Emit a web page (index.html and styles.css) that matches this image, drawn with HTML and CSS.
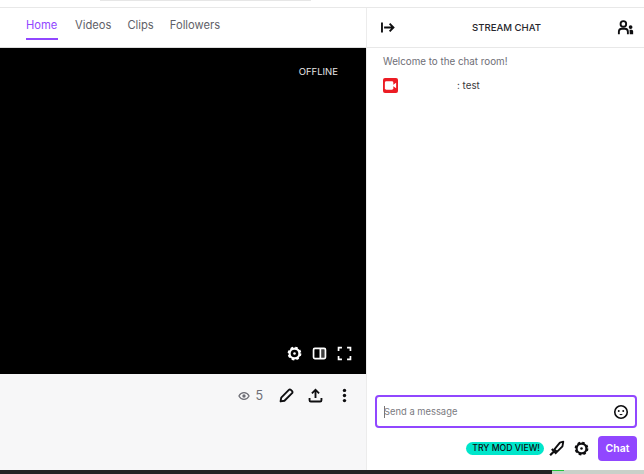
FILE: index.html
```html
<!DOCTYPE html>
<html lang="en">
<head>
    <meta charset="UTF-8">
    <title>Stream</title>
    <link rel="stylesheet" href="styles.css">
</head>
<body>
    <div class="top-strip"><div class="top-search"></div></div>
    <div class="page">
        <div class="main">
            <nav class="tabs">
                <a class="tab active">Home</a>
                <a class="tab">Videos</a>
                <a class="tab">Clips</a>
                <a class="tab">Followers</a>
            </nav>
            <div class="player">
                <span class="offline">OFFLINE</span>
                <div class="player-controls">
                    <svg class="icon" viewBox="0 0 20 20"><use href="#gear-white"/></svg>
                    <svg class="icon" viewBox="0 0 20 20"><rect x="3" y="4" width="14" height="12" rx="1.5" fill="none" stroke="#fff" stroke-width="2"/><path d="M11 4h5.5a.5.5 0 0 1 .5.5v11a.5.5 0 0 1-.5.5H11z" fill="#fff" opacity=".25"/><path d="M11 4v12" stroke="#fff" stroke-width="2"/></svg>
                    <svg class="icon" viewBox="0 0 20 20"><path d="M3 7V3h4M13 3h4v4M17 13v4h-4M7 17H3v-4" fill="none" stroke="#fff" stroke-width="2"/></svg>
                </div>
            </div>
            <div class="info">
                <div class="views">
                    <svg class="eye" viewBox="0 0 20 20"><path d="M1.500 10c2-3.800 4.900-5.500 8.500-5.500s6.500 1.700 8.500 5.500c-2 3.800-4.900 5.500-8.500 5.500s-6.500-1.700-8.500-5.500z" fill="none" stroke="#6e6e76" stroke-width="2"/><circle cx="10" cy="10" r="2.800" fill="#6e6e76"/></svg>
                    <span>5</span>
                </div>
                <svg class="icon edit" viewBox="0 0 20 20"><path d="M3 17l.8-4.600L12.800 3.400a1.600 1.600 0 0 1 2.300 0l1.500 1.500a1.600 1.600 0 0 1 0 2.300L7.600 16.200z" fill="none" stroke="#0e0e10" stroke-width="2.200" stroke-linejoin="round"/></svg>
                <svg class="icon share" viewBox="0 0 20 20"><path d="M10 13V3.500M5.800 7.500L10 3.200l4.200 4.300M3 13v2.500a1.500 1.500 0 0 0 1.500 1.500h11a1.500 1.500 0 0 0 1.500-1.500V13" fill="none" stroke="#0e0e10" stroke-width="2.200"/></svg>
                <svg class="icon more" viewBox="0 0 20 20"><circle cx="10" cy="4" r="2" fill="#0e0e10"/><circle cx="10" cy="10" r="2" fill="#0e0e10"/><circle cx="10" cy="16" r="2" fill="#0e0e10"/></svg>
            </div>
        </div>
        <aside class="chat">
            <header class="chat-head">
                <svg class="icon" viewBox="0 0 20 20"><path d="M3.500 4v12M6 10h11M12.500 5.500L17 10l-4.500 4.500" fill="none" stroke="#0e0e10" stroke-width="2.200"/></svg>
                <span class="chat-title">STREAM CHAT</span>
                <svg class="icon" viewBox="0 0 20 20"><circle cx="7.500" cy="5.800" r="3.300" fill="none" stroke="#0e0e10" stroke-width="2.200"/><path d="M2.200 18v-3a3.500 3.500 0 0 1 3.500-3.500h3.600a3.500 3.500 0 0 1 3.500 3.500v3" fill="none" stroke="#0e0e10" stroke-width="2.200"/><circle cx="16" cy="9.500" r="2.200" fill="#0e0e10"/><path d="M14.800 12.500h2.400a1.800 1.800 0 0 1 1.800 1.800V18h-4z" fill="#0e0e10"/></svg>
            </header>
            <div class="messages">
                <p class="welcome">Welcome to the chat room!</p>
                <div class="message">
                    <span class="badge"><svg viewBox="0 0 16 16"><rect x="2" y="3.500" width="9" height="9" rx="1.500" fill="#fff"/><path d="M10.500 7.500l3.500-2.500v6l-3.500-2.500z" fill="#fff"/></svg></span>
                    <span class="msg-text">: test</span>
                </div>
            </div>
            <div class="composer">
                <div class="input-box">
                    <span class="caret"></span>
                    <span class="placeholder">Send a message</span>
                    <svg class="icon smile" viewBox="0 0 20 20"><circle cx="10" cy="10" r="7.800" fill="none" stroke="#0e0e10" stroke-width="2"/><circle cx="7.200" cy="8.800" r="1.200" fill="#0e0e10"/><circle cx="12.800" cy="8.800" r="1.200" fill="#0e0e10"/><path d="M7.800 12.500a2.400 2.400 0 0 0 4.400 0z" fill="#0e0e10"/></svg>
                </div>
                <div class="composer-actions">
                    <span class="mod-pill">TRY MOD VIEW!</span>
                    <svg class="icon sword" viewBox="0 0 20 20"><path d="M18 2l-1 5.500-6.500 6.500-3-3L14 3z" fill="none" stroke="#0e0e10" stroke-width="2.200" stroke-linejoin="round"/><path d="M4.500 10.500l5.500 5.500M7 13.500L2.500 18" fill="none" stroke="#0e0e10" stroke-width="2.600"/></svg>
                    <svg class="icon" viewBox="0 0 20 20"><use href="#gear-dark"/></svg>
                    <button class="chat-btn">Chat</button>
                </div>
            </div>
        </aside>
    </div>
    <div class="taskbar">
        <div class="task-dark"></div>
        <div class="task-green"></div>
        <div class="task-gray"></div>
    </div>

    <svg class="defs" width="0" height="0">
        <defs>
            <g id="gear-white">
                <circle cx="10" cy="10" r="5.800" fill="none" stroke="#fff" stroke-width="2.600"/>
                <circle cx="10" cy="10" r="7" fill="none" stroke="#fff" stroke-width="2.200" stroke-dasharray="3 2.500"/>
                <circle cx="10" cy="10" r="1.500" fill="#fff"/>
            </g>
            <g id="gear-dark">
                <circle cx="10" cy="10" r="5.800" fill="none" stroke="#0e0e10" stroke-width="2.600"/>
                <circle cx="10" cy="10" r="7" fill="none" stroke="#0e0e10" stroke-width="2.200" stroke-dasharray="3 2.500"/>
                <circle cx="10" cy="10" r="1.500" fill="#0e0e10"/>
            </g>
        </defs>
    </svg>
</body>
</html>
```

FILE: styles.css
```css
* {
    box-sizing: border-box;
}

html, body {
    height: 100%;
}

body {
    margin: 0;
    font-family: Inter, "Liberation Sans", sans-serif;
    background: #fff;
    color: #0e0e10;
    display: flex;
    flex-direction: column;
    overflow: hidden;
}

.defs {
    display: none;
}

.top-strip {
    height: 8px;
    flex: none;
    border-bottom: 1px solid #e8e8e8;
    padding-left: 100px;
}

.top-search {
    width: 211px;
    height: 1px;
    background: #e6e6e6;
}

.page {
    flex: 1;
    display: flex;
    min-height: 0;
}

.main {
    width: 367px;
    flex: none;
    display: flex;
    flex-direction: column;
    border-right: 1px solid #ececec;
}

.tabs {
    height: 40px;
    flex: none;
    display: flex;
    gap: 16px;
    padding-left: 26px;
    border-bottom: 1px solid #ddd;
}

.tab {
    height: 32px;
    padding-top: 9px;
    font-size: 11.200px;
    line-height: 16px;
    color: #5f5f68;
}

.tab.active {
    min-width: 32px;
    margin-right: 1px;
    color: #9147ff;
    border-bottom: 2px solid #9147ff;
}

.player {
    position: relative;
    height: 326px;
    flex: none;
    background: #000;
}

.offline {
    position: absolute;
    top: 17px;
    right: 28px;
    font-size: 9.500px;
    line-height: 13px;
    color: #e6e6e6;
}

.player-controls {
    position: absolute;
    right: 13px;
    bottom: 12px;
    display: flex;
    gap: 8px;
}

.icon {
    width: 17px;
    height: 17px;
    flex: none;
}

.info {
    flex: 1;
    background: #f7f7f8;
    display: flex;
    justify-content: flex-end;
    align-items: flex-start;
    padding: 13px 13px 0 0;
}

.views {
    display: flex;
    align-items: center;
    gap: 5px;
    height: 17px;
    font-size: 12.500px;
    color: #6e6e76;
    margin-right: 15px;
}

.eye {
    width: 12px;
    height: 12px;
}

.edit {
    margin-right: 12px;
}

.share {
    margin-right: 12px;
}

.chat {
    flex: 1;
    min-width: 0;
    display: flex;
    flex-direction: column;
}

.chat-head {
    height: 40px;
    flex: none;
    display: flex;
    align-items: center;
    justify-content: space-between;
    padding: 0 10px 0 12px;
    border-bottom: 1px solid #e8e8e8;
}

.chat-title {
    font-size: 9.600px;
    font-weight: 500;
    color: #26262c;
}

.messages {
    flex: 1;
    padding: 7px 16px 0;
    font-size: 9.800px;
}

.welcome {
    margin: 0;
    height: 13px;
    line-height: 13px;
    color: #6e6e76;
}

.message {
    display: flex;
    align-items: center;
    margin-top: 9px;
    height: 16px;
}

.badge {
    width: 15px;
    height: 15px;
    border-radius: 2px;
    background: #ec1c24;
    display: flex;
}

.msg-text {
    margin-left: 59px;
    color: #3a3a3d;
}

.composer {
    flex: none;
    padding: 0 7px 9px 8px;
}

.input-box {
    height: 33px;
    display: flex;
    align-items: center;
    padding: 0 6px 0 7px;
    border: 2px solid #9147ff;
    border-radius: 4px;
}

.caret {
    width: 1px;
    height: 12px;
    margin-right: -1px;
    background: #777;
}

.placeholder {
    flex: 1;
    font-size: 9.400px;
    color: #7a7a80;
}

.smile {
    width: 16px;
    height: 16px;
}

.composer-actions {
    display: flex;
    align-items: center;
    justify-content: flex-end;
    margin-top: 8px;
    height: 25px;
}

.mod-pill {
    height: 13px;
    line-height: 13px;
    padding: 0 4px 0 6px;
    border-radius: 7px;
    background: #00e6cb;
    font-size: 8.700px;
    font-weight: 500;
    white-space: nowrap;
    margin-right: 4px;
}

.composer-actions .icon {
    margin-right: 8px;
}

.chat-btn {
    width: 39px;
    height: 25px;
    border: none;
    border-radius: 4px;
    background: #9147ff;
    color: #fff;
    font-family: inherit;
    font-size: 10.500px;
    font-weight: 600;
    padding: 0;
}

.taskbar {
    height: 4px;
    flex: none;
    display: flex;
}

.task-dark {
    width: 552px;
    background: #222;
}

.task-green {
    width: 12px;
    background: #c9d0c9;
    border-top: 1px solid #22c53a;
}

.task-gray {
    flex: 1;
    background: #c9d0c9;
}
```
